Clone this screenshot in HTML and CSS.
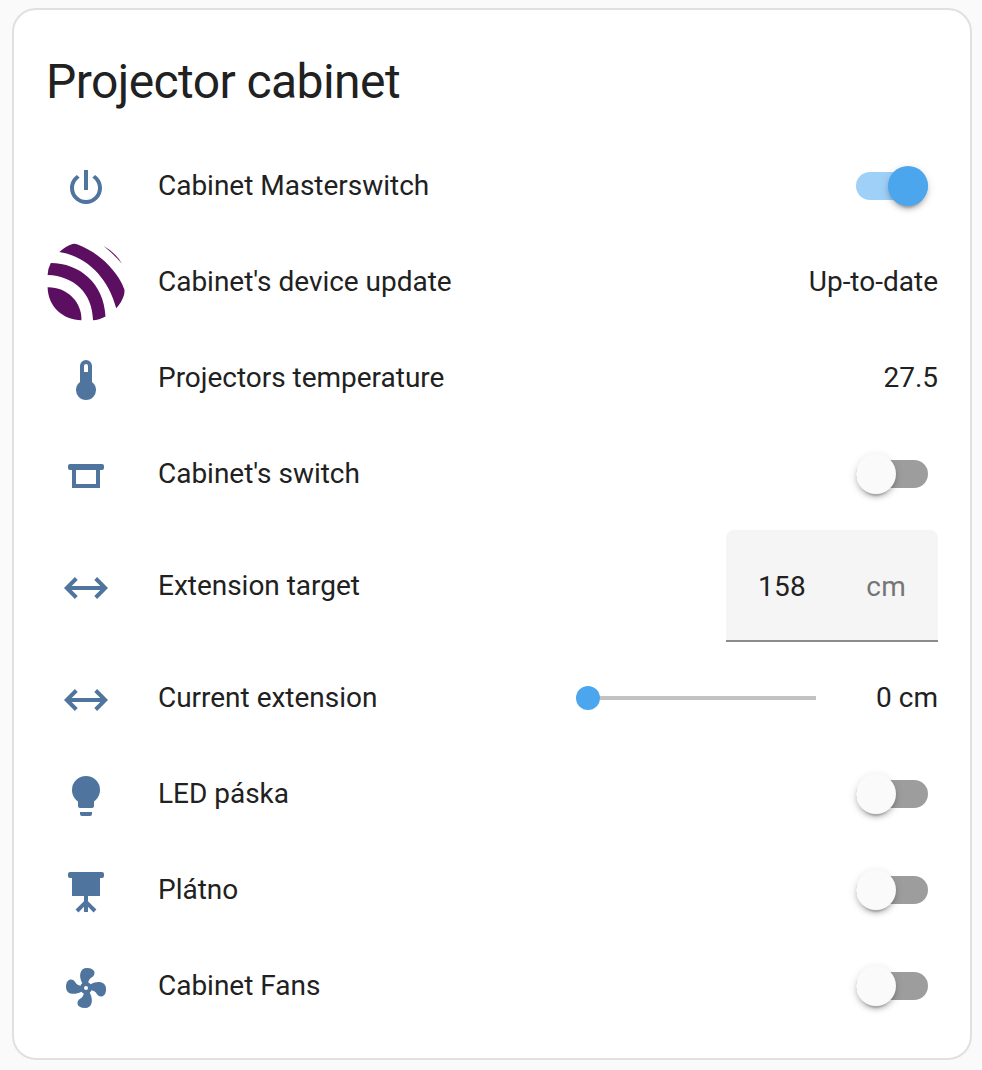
FILE: index.html
```html
<!DOCTYPE html>
<html lang="en">
<head>
<meta charset="utf-8">
<title>Projector cabinet</title>
<link rel="stylesheet" href="styles.css">
</head>
<body>
<main class="card">
  <h1 class="title">Projector cabinet</h1>
  <div class="rows">
    <div class="row">
      <svg class="icon" viewBox="0 0 24 24"><path d="M16.56,5.44L15.11,6.89C16.84,7.94 18,9.83 18,12A6,6 0 0,1 12,18A6,6 0 0,1 6,12C6,9.83 7.16,7.94 8.88,6.88L7.44,5.44C5.36,6.88 4,9.28 4,12A8,8 0 0,0 12,20A8,8 0 0,0 20,12C20,9.28 18.64,6.88 16.56,5.44M13,3H11V13H13"/></svg>
      <span class="name">Cabinet Masterswitch</span>
      <span class="switch on"><span class="thumb"></span></span>
    </div>
    <div class="row">
      <svg class="logo" viewBox="0 0 80 80">
        <path d="M13.3 10Q20 4 26.5 2Q28.8 1.2 31 2.2C50 9 71 27 78.4 47.5Q78.7 50 78 53Q76 60 70.2 66.3C62 35 40 14 13.3 10Z"/>
        <path d="M4.8 21C33 21 58 41 59.5 74.5Q53 78.2 47 78.2C46.5 51 28 34 1.6 33Q2 26 4.8 21Z"/>
        <path d="M1.6 45.3C21 45 36 60 35.4 78.2C17 78 2 65 1.6 45.3Z"/>
        <path d="M57.5 4Q69 9.8 76 21.8Q67.5 11.8 57.5 4Z"/>
      </svg>
      <span class="name">Cabinet's device update</span>
      <span class="value">Up-to-date</span>
    </div>
    <div class="row">
      <svg class="icon" viewBox="0 0 24 24"><path d="M15 13V5A3 3 0 0 0 9 5V13A5 5 0 1 0 15 13M12 4A1 1 0 0 1 13 5V8H11V5A1 1 0 0 1 12 4Z"/></svg>
      <span class="name">Projectors temperature</span>
      <span class="value">27.5</span>
    </div>
    <div class="row">
      <svg class="icon" viewBox="0 0 24 24"><path d="M4,6A1,1 0 0,0 3,7V8A1,1 0 0,0 4,9H5V18H19V9H20A1,1 0 0,0 21,8V7A1,1 0 0,0 20,6H4M7,9H17V16H7V9Z"/></svg>
      <span class="name">Cabinet's switch</span>
      <span class="switch"><span class="thumb"></span></span>
    </div>
    <div class="row tall">
      <svg class="icon" viewBox="0 0 24 24"><path d="M6.45,17.45L1,12L6.45,6.55L7.86,7.96L4.83,11H19.17L16.14,7.96L17.55,6.55L23,12L17.55,17.45L16.14,16.04L19.17,13H4.83L7.86,16.04L6.45,17.45Z"/></svg>
      <span class="name">Extension target</span>
      <span class="field"><span>158</span><span class="unit">cm</span></span>
    </div>
    <div class="row">
      <svg class="icon" viewBox="0 0 24 24"><path d="M6.45,17.45L1,12L6.45,6.55L7.86,7.96L4.83,11H19.17L16.14,7.96L17.55,6.55L23,12L17.55,17.45L16.14,16.04L19.17,13H4.83L7.86,16.04L6.45,17.45Z"/></svg>
      <span class="name">Current extension</span>
      <span class="slider"><span class="knob"></span><span class="track"></span></span>
      <span class="value slider-value">0 cm</span>
    </div>
    <div class="row">
      <svg class="icon" viewBox="0 0 24 24"><path d="M12,2A7,7 0 0,0 5,9C5,11.38 6.19,13.47 8,14.74V17A1,1 0 0,0 9,18H15A1,1 0 0,0 16,17V14.74C17.81,13.47 19,11.38 19,9A7,7 0 0,0 12,2M9,21A1,1 0 0,0 10,22H14A1,1 0 0,0 15,21V20H9V21Z"/></svg>
      <span class="name">LED páska</span>
      <span class="switch"><span class="thumb"></span></span>
    </div>
    <div class="row">
      <svg class="icon" viewBox="0 0 24 24"><path d="M4,2A1,1 0 0,0 3,3V4A1,1 0 0,0 4,5H5V14H11V16.59L6.79,20.79L8.21,22.21L11,19.41V22H13V19.41L15.79,22.21L17.21,20.79L13,16.59V14H19V5H20A1,1 0 0,0 21,4V3A1,1 0 0,0 20,2H4Z"/></svg>
      <span class="name">Plátno</span>
      <span class="switch"><span class="thumb"></span></span>
    </div>
    <div class="row">
      <svg class="icon" viewBox="0 0 24 24"><path d="M12,11A1,1 0 0,0 11,12A1,1 0 0,0 12,13A1,1 0 0,0 13,12A1,1 0 0,0 12,11M12.5,2C17,2 17.11,5.57 14.75,6.75C13.76,7.24 13.32,8.29 13.13,9.22C13.61,9.42 14.03,9.73 14.35,10.13C18.05,8.13 22.03,8.92 22.03,12.5C22.03,17 18.46,17.1 17.28,14.73C16.78,13.74 15.72,13.3 14.79,13.11C14.59,13.59 14.28,14 13.88,14.34C15.87,18.03 15.08,22 11.5,22C7,22 6.91,18.42 9.27,17.24C10.25,16.75 10.69,15.71 10.89,14.79C10.4,14.59 9.97,14.27 9.65,13.87C5.96,15.85 2,15.07 2,11.5C2,7 5.56,6.89 6.74,9.26C7.24,10.25 8.29,10.68 9.22,10.87C9.41,10.39 9.73,9.97 10.14,9.65C8.15,5.96 8.94,2 12.5,2Z"/></svg>
      <span class="name">Cabinet Fans</span>
      <span class="switch"><span class="thumb"></span></span>
    </div>
  </div>
</main>
</body>
</html>
```
FILE: styles.css
```css
* { box-sizing: border-box; }
body {
  margin: 0;
  height: 1070px;
  padding: 8px 10px 10px 12px;
  background: #fafafa;
  color: #212121;
  font: 28px/40px Roboto, sans-serif;
  overflow: hidden;
}
.card {
  height: 1052px;
  padding: 24px 32px 32px;
  background: #fff;
  border: 2px solid #e0e0e0;
  border-radius: 24px;
}
.title {
  margin: 0;
  height: 112px;
  font-size: 48px;
  font-weight: 400;
  line-height: 96px;
  letter-spacing: -0.576px;
}
.rows { display: flex; flex-direction: column; gap: 16px; }
.row { display: flex; align-items: center; height: 80px; }
.tall { height: 112px; }
.icon {
  flex: none;
  width: 48px;
  height: 48px;
  margin: 4px 16px 0;
  fill: #4f749e;
}
.logo { flex: none; width: 80px; height: 80px; fill: #5c0f60; }
.name { flex: 1; margin-left: 32px; white-space: nowrap; letter-spacing: -.02px; }
.value { text-align: right; white-space: nowrap; }
.switch {
  display: flex;
  align-items: center;
  width: 72px;
  height: 28px;
  margin-right: 10px;
  border-radius: 14px;
  background: #9d9d9d;
}
.thumb {
  width: 40px;
  height: 40px;
  flex: none;
  border-radius: 50%;
  background: #fafafa;
  box-shadow: 0 6px 2px -4px rgba(0,0,0,.2), 0 4px 4px rgba(0,0,0,.14), 0 2px 10px rgba(0,0,0,.12);
}
.on { justify-content: flex-end; background: #9fd0f7; }
.on .thumb { background: #4ba6ee; }
.field {
  display: flex;
  justify-content: space-between;
  align-items: center;
  width: 212px;
  height: 112px;
  padding: 4px 32px 0;
  background: #f5f5f5;
  border-bottom: 2px solid #8c8c8c;
  border-radius: 8px 8px 0 0;
  letter-spacing: .25px;
}
.unit { color: #757575; }
.slider { display: flex; align-items: center; width: 240px; }
.knob { width: 24px; height: 24px; border-radius: 50%; background: #4ba6ee; }
.track { flex: 1; height: 4px; background: #c2c2c2; }
.slider-value { width: 122px; }
```
